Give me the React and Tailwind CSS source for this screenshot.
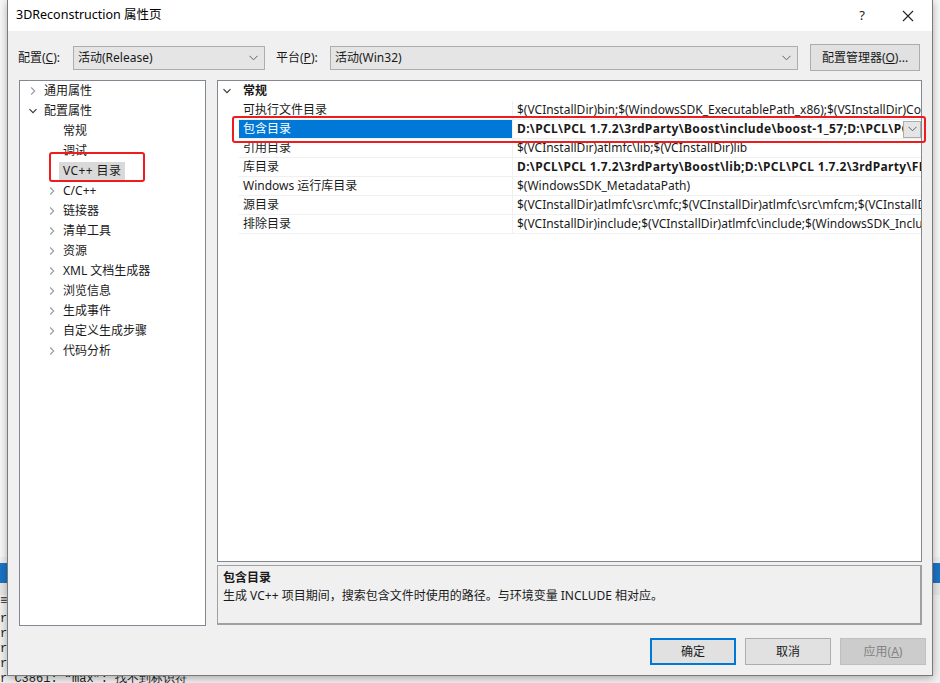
import React from "react";

const Chev = ({ open = false }) =>
  open ? (
    <svg width="10" height="10" viewBox="0 0 10 10" className="block">
      <path d="M1.5 3.2 L5 6.7 L8.5 3.2" fill="none" stroke="#333" strokeWidth="1.1" />
    </svg>
  ) : (
    <svg width="10" height="10" viewBox="0 0 10 10" className="block">
      <path d="M3.2 1.5 L6.7 5 L3.2 8.5" fill="none" stroke="#9a9a9a" strokeWidth="1.1" />
    </svg>
  );

const ComboChev = () => (
  <svg width="9" height="6" viewBox="0 0 9 6" className="block">
    <path d="M0.5 0.8 L4.5 4.8 L8.5 0.8" fill="none" stroke="#606060" strokeWidth="1" />
  </svg>
);

const treeItems = [
  { label: "通用属性", level: 0, chev: "closed" },
  { label: "配置属性", level: 0, chev: "open" },
  { label: "常规", level: 1 },
  { label: "调试", level: 1 },
  { label: "VC++ 目录", level: 1, selected: true },
  { label: "C/C++", level: 1, chev: "closed" },
  { label: "链接器", level: 1, chev: "closed" },
  { label: "清单工具", level: 1, chev: "closed" },
  { label: "资源", level: 1, chev: "closed" },
  { label: "XML 文档生成器", level: 1, chev: "closed" },
  { label: "浏览信息", level: 1, chev: "closed" },
  { label: "生成事件", level: 1, chev: "closed" },
  { label: "自定义生成步骤", level: 1, chev: "closed" },
  { label: "代码分析", level: 1, chev: "closed" },
];

const rows = [
  { name: "可执行文件目录", value: "$(VCInstallDir)bin;$(WindowsSDK_ExecutablePath_x86);$(VSInstallDir)Common7\\Tools\\bin;$(VSInstallDir)Common7\\tools" },
  { name: "包含目录", value: "D:\\PCL\\PCL 1.7.2\\3rdParty\\Boost\\include\\boost-1_57;D:\\PCL\\PCL 1.7.2\\include", bold: true, selected: true },
  { name: "引用目录", value: "$(VCInstallDir)atlmfc\\lib;$(VCInstallDir)lib" },
  { name: "库目录", value: "D:\\PCL\\PCL 1.7.2\\3rdParty\\Boost\\lib;D:\\PCL\\PCL 1.7.2\\3rdParty\\FLANN\\lib;D:\\PCL\\PCL 1.7.2\\lib", bold: true },
  { name: "Windows 运行库目录", value: "$(WindowsSDK_MetadataPath)" },
  { name: "源目录", value: "$(VCInstallDir)atlmfc\\src\\mfc;$(VCInstallDir)atlmfc\\src\\mfcm;$(VCInstallDir)atlmfc\\src\\atl;$(VCInstallDir)crt\\src" },
  { name: "排除目录", value: "$(VCInstallDir)include;$(VCInstallDir)atlmfc\\include;$(WindowsSDK_IncludePath);$(MSBuildToolsPath32)" },
];

export default function App() {
  return (
    <div className="relative w-[940px] h-[683px] overflow-hidden bg-[#f0f0f0] font-['Noto_Sans','Noto_Sans_CJK_SC',sans-serif] text-[12px] text-[#1a1a1a]">
      {/* background desktop behind dialog */}
      <div className="absolute left-0 top-0 w-[940px] h-[557px] bg-[#f7f7f7]" />
      <div className="absolute left-0 top-[563px] w-[940px] h-[20px] bg-[#1a73c4]" />
      <div className="absolute left-0 top-[583px] w-[940px] h-[12px] bg-[#e6e6e6]" />
      <div className="absolute left-0 top-[594px] font-['Liberation_Mono',monospace] text-[12px] leading-[15px] text-[#222]">≡</div>
      <div className="absolute left-0 top-[612px] flex flex-col font-['Liberation_Mono',monospace] text-[12px] leading-[15px] text-[#222]">
        <span>r</span>
        <span>r</span>
        <span>r</span>
        <span>r</span>
        <span className="whitespace-nowrap">r C3861: “max”: 找不到标识符</span>
      </div>

      {/* dialog window */}
      <div className="absolute left-[7px] top-0 w-[926px] h-[676px] bg-[#f0f0f0] border border-t-0 border-[#7a7a7a] shadow-[0_2px_8px_rgba(0,0,0,0.3)] flex flex-col">
        {/* title bar */}
        <div className="h-[31px] bg-white flex items-center pl-[8px] pr-[12px] leading-none">
          <span className="text-[12.5px] text-black">3DReconstruction 属性页</span>
          <span className="ml-auto text-[13px] text-[#222] mr-[37px]">?</span>
          <svg width="12" height="12" viewBox="0 0 12 12" className="block mr-[6px]">
            <path d="M1 1 L11 11 M11 1 L1 11" stroke="#222" strokeWidth="1.1" />
          </svg>
        </div>

        {/* config row */}
        <div className="h-[49px] pt-[13px] pl-[10px] flex items-start">
          <div className="h-[27px] flex items-center w-[55px]">
            配置(<span className="underline">C</span>):
          </div>
          <div className="mt-[2px] h-[24px] w-[192px] bg-[#e5e5e5] border border-[#adadad] flex items-center pl-[4px] pr-[6px]">
            <span>活动(Release)</span>
            <span className="ml-auto"><ComboChev /></span>
          </div>
          <div className="h-[27px] flex items-center ml-[11px] w-[54px]">
            平台(<span className="underline">P</span>):
          </div>
          <div className="mt-[2px] h-[24px] w-[468px] bg-[#e5e5e5] border border-[#adadad] flex items-center pl-[4px] pr-[6px]">
            <span>活动(Win32)</span>
            <span className="ml-auto"><ComboChev /></span>
          </div>
          <div className="ml-[12px] h-[27px] w-[110px] bg-[#e1e1e1] border border-[#adadad] flex items-center justify-center">
            配置管理器(<span className="underline">O</span>)...
          </div>
        </div>

        {/* main panels */}
        <div className="flex pl-[11px] gap-[11px] h-[546px]">
          {/* tree */}
          <div className="relative w-[187px] h-[546px] bg-white border border-[#828790]">
            {treeItems.map((it, i) => (
              <div key={i} className={`h-[20px] flex items-center leading-none ${it.level === 0 ? "pl-[8px]" : "pl-[27px]"}`}>
                <span className="w-[16px] flex items-center">
                  {it.chev === "open" && <Chev open />}
                  {it.chev === "closed" && <Chev />}
                </span>
                <span className={`whitespace-nowrap ${it.selected ? "bg-[#d9d9d9] px-[4px] -ml-[4px] h-[18px] flex items-center tracking-[0.4px]" : ""}`}>{it.label}</span>
              </div>
            ))}
            <div className="absolute left-[29px] top-[71px] w-[96px] h-[30px] border-[2.5px] border-[#ee1c1c] rounded-[3px]" />
          </div>

          {/* right side */}
          <div className="flex flex-col w-[705px]">
            <div className="relative h-[482px] bg-white border border-[#828790]">
              <div className="h-[20px] flex items-center pl-[4px] leading-none">
                <span className="w-[21px] flex items-center"><Chev open /></span>
                <span className="font-bold">常规</span>
              </div>
              {rows.map((r, i) => (
                <div key={i} className="h-[19px] flex pl-[21px] leading-none">
                  <div className={`w-[273px] flex items-center pl-[4px] border-b border-[#f0f0f0] ${r.selected ? "bg-[#0078d7] text-white border-[#0078d7]" : ""}`}>
                    {r.name}
                  </div>
                  <div className="flex-1 min-w-0 flex items-center pl-[4px] border-l border-b border-[#f0f0f0] overflow-hidden">
                    <span className={`whitespace-nowrap ${r.bold ? "font-bold tracking-[0.35px]" : ""}`}>{r.value}</span>
                    {r.selected && (
                      <span className="absolute right-[0px] w-[18px] h-[17px] bg-[#e5e5e5] border border-[#adadad] flex items-center justify-center">
                        <ComboChev />
                      </span>
                    )}
                  </div>
                </div>
              ))}
              <div className="absolute left-[14px] top-[35px] w-[694px] h-[27px] border-[2.5px] border-[#ee1c1c] rounded-[3px]" />
            </div>
            <div className="mt-[3px] h-[60px] bg-[#f0f0f0] border border-[#a0a0a0] border-r-2 border-b-2 pl-[5px] pt-[3px] leading-[18px]">
              <div className="font-bold">包含目录</div>
              <div>生成 VC++ 项目期间，搜索包含文件时使用的路径。与环境变量 INCLUDE 相对应。</div>
            </div>
          </div>
        </div>

        {/* buttons */}
        <div className="flex pl-[642px] pt-[12px] gap-[9px]">
          <div className="w-[86px] h-[27px] bg-[#e1e1e1] border-2 border-[#0078d7] flex items-center justify-center">确定</div>
          <div className="w-[86px] h-[27px] bg-[#e1e1e1] border border-[#adadad] flex items-center justify-center">取消</div>
          <div className="w-[86px] h-[27px] bg-[#cccccc] border border-[#bfbfbf] flex items-center justify-center text-[#838383]">
            应用(<span className="underline">A</span>)
          </div>
        </div>
      </div>
    </div>
  );
}
